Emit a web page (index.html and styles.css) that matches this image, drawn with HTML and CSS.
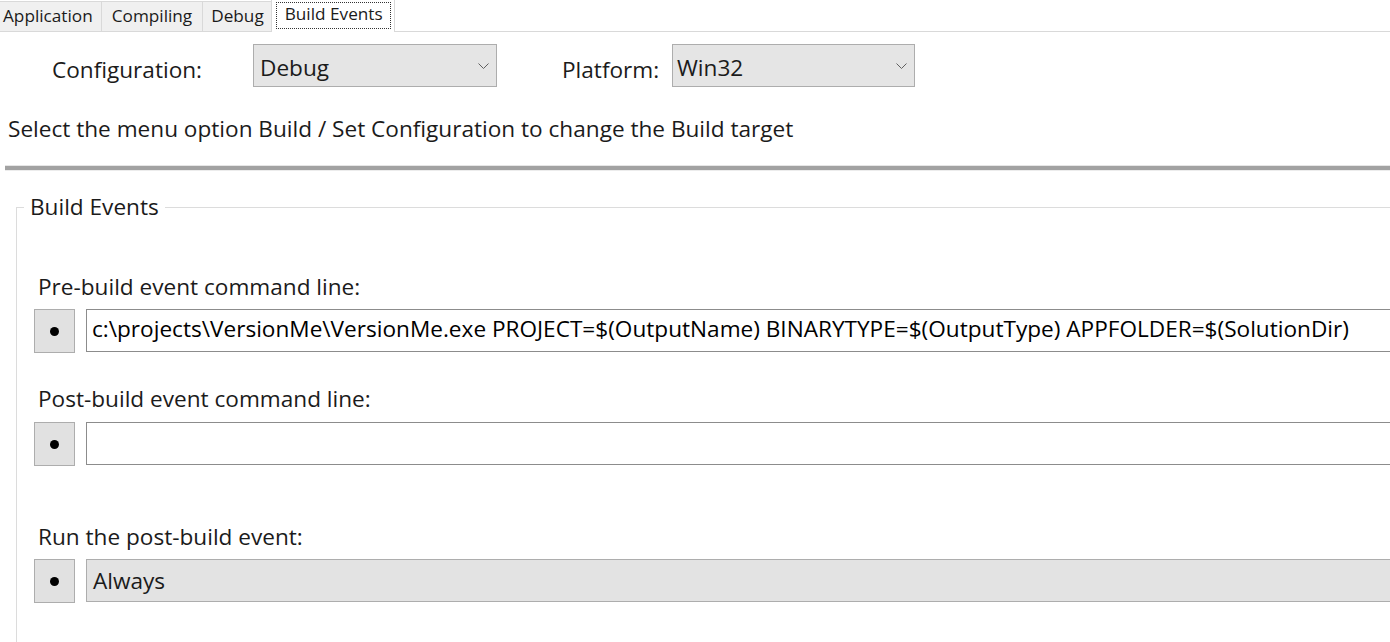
FILE: index.html
```html
<!DOCTYPE html>
<html lang="en">
<head>
<meta charset="utf-8">
<title>Build Events</title>
<link rel="stylesheet" href="styles.css">
</head>
<body>
<div class="page">
  <div class="tabs">
    <div class="tab tab-first">Application</div>
    <div class="tab tab-compiling">Compiling</div>
    <div class="tab tab-debug">Debug</div>
    <div class="tab active"><span class="focus">Build Events</span></div>
  </div>

  <div class="config-row">
    <span class="config-label config-label-first">Configuration:</span>
    <div class="combo combo-config"><span>Debug</span><svg class="chev" width="11" height="6" viewBox="0 0 11 6"><path d="M0.5 0.5 L5.5 5.5 L10.5 0.5" fill="none" stroke="#606060" stroke-width="1"/></svg></div>
    <span class="config-label config-label-second">Platform:</span>
    <div class="combo combo-platform"><span>Win32</span><svg class="chev" width="11" height="6" viewBox="0 0 11 6"><path d="M0.5 0.5 L5.5 5.5 L10.5 0.5" fill="none" stroke="#606060" stroke-width="1"/></svg></div>
  </div>

  <p class="hint">Select the menu option Build / Set Configuration to change the Build target</p>

  <div class="separator"></div>

  <fieldset class="group">
    <legend class="group-title">Build Events</legend>

    <div class="field field-pre">
      <div class="field-label">Pre-build event command line:</div>
      <div class="field-row">
        <button class="dot-btn" type="button"><span class="dot"></span></button>
        <div class="text-box">c:\projects\VersionMe\VersionMe.exe PROJECT=$(OutputName) BINARYTYPE=$(OutputType) APPFOLDER=$(SolutionDir)</div>
      </div>
    </div>

    <div class="field field-post">
      <div class="field-label">Post-build event command line:</div>
      <div class="field-row">
        <button class="dot-btn" type="button"><span class="dot"></span></button>
        <div class="text-box"></div>
      </div>
    </div>

    <div class="field field-run">
      <div class="field-label">Run the post-build event:</div>
      <div class="field-row">
        <button class="dot-btn" type="button"><span class="dot"></span></button>
        <div class="text-box text-box-combo">Always</div>
      </div>
    </div>
  </fieldset>
</div>
</body>
</html>
```

FILE: styles.css
```css
html, body {
  margin: 0;
  padding: 0;
  background: #ffffff;
}

body {
  width: 1390px;
  height: 642px;
  overflow: hidden;
  font-family: "Open Sans", "Noto Sans", sans-serif;
  font-size: 22.6px;
  line-height: 30px;
  color: #1b1b1b;
}

.page {
  width: 1390px;
}

/* Tabs */
.tabs {
  display: flex;
  align-items: flex-end;
  height: 32px;
  box-sizing: border-box;
  border-bottom: 1px solid #d9d9d9;
  font-size: 17.2px;
  line-height: 22px;
}

.tab {
  height: 30px;
  box-sizing: border-box;
  padding: 3px 9px 0 9px;
  background: #f0f0f0;
  border: 1px solid #d9d9d9;
  border-bottom: none;
  margin-left: -1px;
  color: #1b1b1b;
}

.tab-first {
  margin-left: 0;
  border-left: none;
  padding-left: 3px;
  padding-right: 8px;
}

.tab-compiling {
  padding-left: 10px;
  padding-right: 10px;
}

.tab-debug {
  padding-left: 8px;
  padding-right: 7px;
}

.tab.active {
  height: 33px;
  margin-bottom: -1px;
  background: #ffffff;
  padding: 2px 3px 0 4px;
}

.focus {
  display: block;
  border: 1px dotted #333;
  padding: 0 7px 3px 8px;
}

/* Configuration row */
.config-row {
  display: flex;
  align-items: flex-start;
  margin-top: 12px;
  padding-left: 52px;
}

.config-label {
  padding-top: 11px;
}

.config-label-first {
  width: 201px;
}

.config-label-second {
  width: 110px;
  margin-left: 65px;
}

.combo {
  display: flex;
  justify-content: space-between;
  align-items: flex-start;
  height: 43px;
  box-sizing: border-box;
  border: 1px solid #adadad;
  background: #e5e5e5;
  padding: 8px 7px 0 6px;
}

.combo-config {
  width: 244px;
}

.combo-platform {
  width: 243px;
  padding-left: 4px;
}

.chev {
  margin-top: 10px;
}

/* Hint */
.hint {
  margin: 27px 0 0 8px;
}

.separator {
  margin: 21px 0 0 5px;
  height: 4px;
  background: #a2a2a2;
  border-top: 1px solid #e6e6e6;
  border-bottom: 1px solid #ececec;
}

/* Group */
.group {
  margin: 21px -40px 0 16px;
  padding: 0 0 80px 17px;
  border: 1px solid #dcdcdc;
  min-width: 0;
}

.group-title {
  padding: 0 6px;
  margin-left: -10px;
}

.field-label {
  padding-left: 4px;
}

.field-pre {
  padding-top: 50px;
}

.field-post {
  margin-top: 31px;
}

.field-run {
  margin-top: 56px;
}

.field-row {
  display: flex;
  align-items: flex-start;
  gap: 11px;
  margin-top: 7px;
}

.field-post .field-row {
  margin-top: 8px;
}

.dot-btn {
  width: 41px;
  height: 44px;
  flex: none;
  padding: 0;
  margin: 0;
  border: 1px solid #adadad;
  background: #e1e1e1;
  display: flex;
  align-items: center;
  justify-content: center;
}

.dot {
  width: 9px;
  height: 9px;
  border-radius: 50%;
  background: #000;
}

.text-box {
  flex: 1;
  height: 43px;
  box-sizing: border-box;
  border: 1px solid #8c8c8c;
  background: #ffffff;
  padding: 4px 0 0 5px;
  white-space: nowrap;
  overflow: hidden;
  color: #000;
}

.text-box-combo {
  background: #e3e3e3;
  border-color: #adadad;
  padding-top: 6px;
  padding-left: 6px;
  color: #1b1b1b;
}
```
